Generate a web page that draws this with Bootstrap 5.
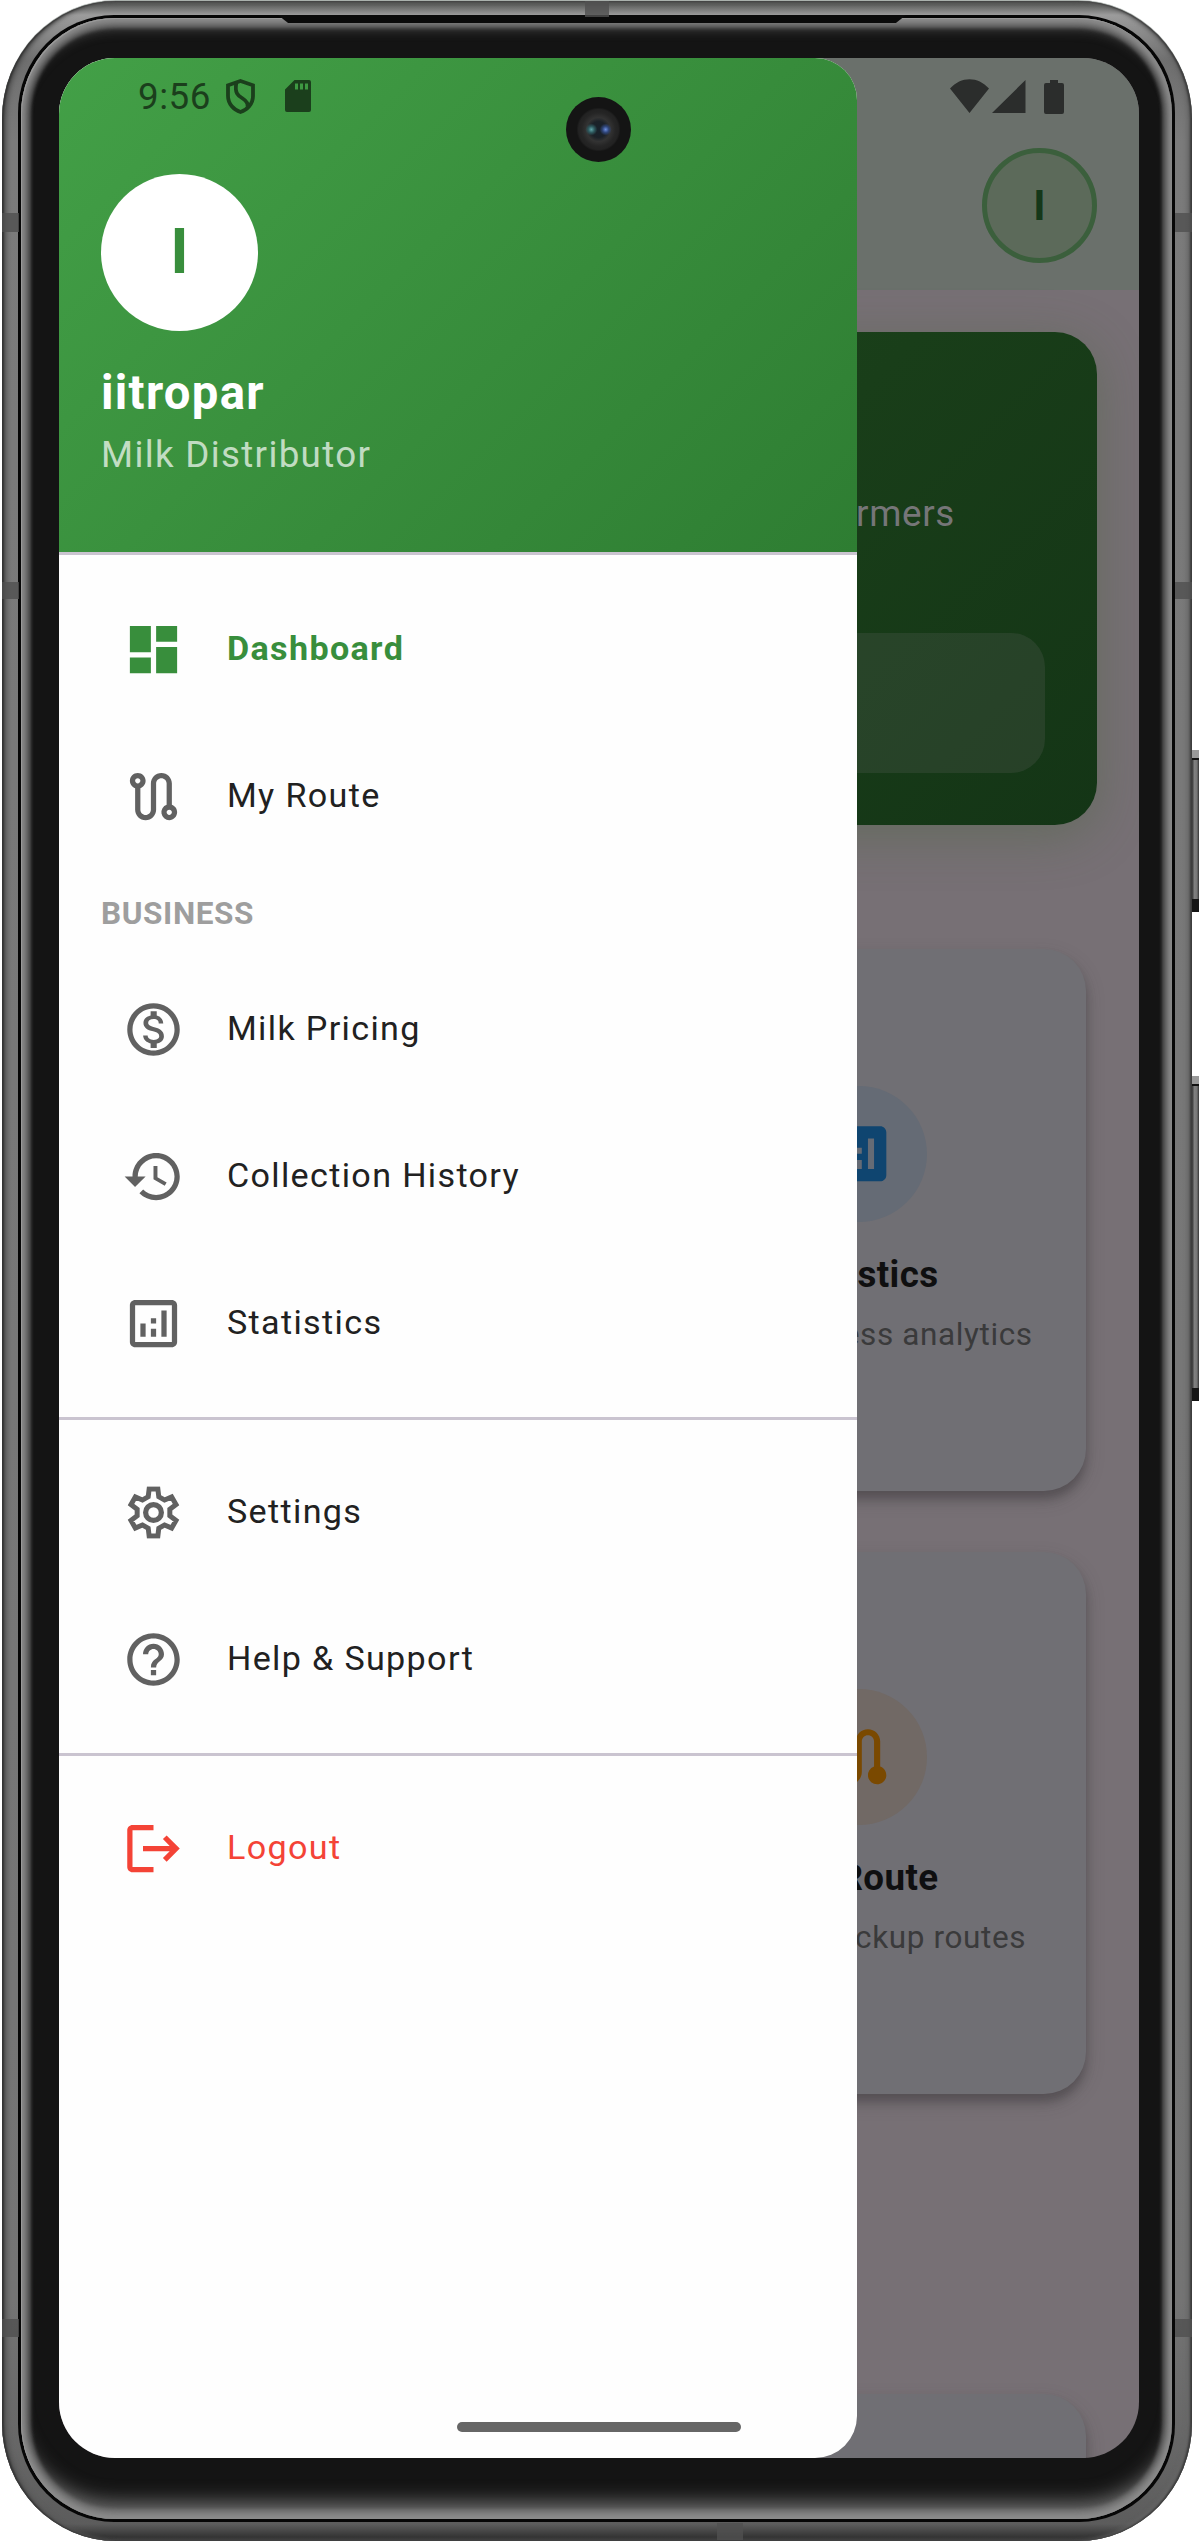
<!DOCTYPE html>
<html lang="en">
<head>
<meta charset="utf-8">
<meta name="viewport" content="width=device-width, initial-scale=1">
<title>Milk Distributor</title>
<link href="https://cdn.jsdelivr.net/npm/bootstrap@5.3.0/dist/css/bootstrap.min.css" rel="stylesheet">
<style>
body{font-family:Roboto,"Liberation Sans",sans-serif;background:#fff;width:1200px;height:2541px;overflow:hidden}
svg{display:block;flex:none}
/* device body */
.phone{width:1190px;height:2540px;margin-left:2px;margin-top:1px;border-radius:114px/118px;padding:14px 17px 19px 16px;
 background:linear-gradient(#474947,#9c9c9c 14px,#6f6f6f 60px,#7b7b7b 140px,#747474 2300px,#666 2450px,#5c5c5c 2523px,#2b2b2b 2539px);
 box-shadow:inset 2px 0 2px #333,inset -2px 0 2px #3c3c3c,inset 5px 0 4px #555,inset -5px 0 4px #666,0 -1px 0 #aab1ad}
.seam{height:100%;border-radius:96px/98px;background:#060606;padding:3px}
.glass{height:100%;border-radius:94px/96px;background:#141414;
 padding:40px 31px 60px 38px;
 box-shadow:inset 1px 1px 0 #999,inset 0 0 7px 6px #8c8c8c,inset 0 16px 14px -8px #6b6b6b,inset 0 -26px 20px -10px #747474,inset 0 0 3px 10px #3a3a3a}
.screen{width:1080px;height:2400px;border-radius:56px;background:#777075}
.band{background:#505050;opacity:.8}
.speaker{left:278px;top:15px;width:628px;height:8px;background:#0b0b0b;clip-path:polygon(0 0,100% 0,98.4% 100%,1.6% 100%)}
.sidekey{left:1192px;width:7px;background:linear-gradient(90deg,#333,#808080 35%,#777 70%,#333);border-top:8px solid #999;box-shadow:inset 0 2px #111,inset 0 -13px #151515}
/* status bar */
.status{height:76px;padding:0 75px 0 79px;color:#1b3f1c}
.clock{font-size:36.75px;letter-spacing:.5px;line-height:43px}
.lens{left:507px;top:39px;width:65px;height:65px;background:radial-gradient(circle at 39% 50%,#5fa3a8 0,#2f5b60 3px,transparent 6px),radial-gradient(circle at 61% 50%,#6d8ee0 0,#30477c 3px,transparent 6px),radial-gradient(circle,#18222c 0,#1b2128 8px,#333 12px,#252525 17px,#222 20px,#141414 22px)}
.pill{left:398px;top:2364px;width:284px;height:10px;background:#666;border-radius:5px}
/* dimmed dashboard */
.topbar{height:232px;background:#6a706b;padding:90px 42px 0}
.me{width:115px;height:115px;border:5px solid #3b5f3c;background:#5c6a5a;color:#15381a;font-size:42px;font-weight:700}
.hero{margin:42px 42px 0;height:493px;border-radius:42px;padding:52px;background:linear-gradient(135deg,#1f4a20,#193e19 55%,#143516);box-shadow:0 11px 50px rgba(75,100,65,.45)}
.hero-text{font-size:36.75px;line-height:43px;letter-spacing:.66px;color:#767678;margin:0 90px 98px 0}
.hero-stat{height:140px;border-radius:34px;background:rgba(119,112,117,.19)}
.tiles{margin-top:124px;padding:0 53px 0 52px;display:grid;grid-template-columns:455px 455px;gap:61px 65px}
.tile{height:542px;border-radius:42px;background:#706f74;padding-top:137px;box-shadow:0 8px 10px rgba(30,25,30,.28),0 8px 20px rgba(60,60,60,.2)}
.dot{width:136px;height:136px}
.tile-title{font-size:36.75px;line-height:50px;font-weight:700;letter-spacing:.4px;color:#0f0f10;margin-top:28px}
.tile-sub{font-size:31.5px;line-height:42px;letter-spacing:.62px;color:#3a3a3b;margin-top:14px;white-space:nowrap}
.recent{margin:300px 53px 0 52px;height:300px}
/* drawer */
.drawer{width:798px;height:2400px;border-radius:0 42px 42px 0;background:#fefefe;color:#212121}
.drawer-head{height:497px;border-bottom:3px solid #cac4d0;padding:116px 42px 0;background:linear-gradient(135deg,#43a047,#2e7d32)}
.initial{width:157px;height:157px;color:#388e3c;font-size:63px;font-weight:700;background:#fff}
.who{font-size:47.25px;line-height:54px;font-weight:700;letter-spacing:1.3px;color:#fff;margin-top:35px}
.role{font-size:36.75px;line-height:43px;letter-spacing:1.32px;color:rgba(255,255,255,.7);margin-top:13px}
.menu{padding-top:21px}
.entry{height:147px;padding:0 63px;gap:42px;font-size:34.125px;letter-spacing:1.34px;color:#212121;text-decoration:none}
.entry span{padding-bottom:2px}
.entry svg{fill:#616161}
.entry.on{color:#388e3c;font-weight:700}
.entry.on svg{fill:#388e3c}
.entry.out{color:#f44336}
.entry.out svg{fill:#f44336}
.group-name{height:86px;padding:2px 42px 0;font-size:31.5px;font-weight:700;letter-spacing:.6px;color:#9e9e9e}
.rule{height:3px;margin:20px 0 19px;background:#cac4d0}
</style>
</head>
<body>
<main class="phone">
 <div class="seam"><div class="glass">
  <div class="screen position-relative overflow-hidden">

   <div class="topbar d-flex justify-content-end">
    <div class="me rounded-circle d-flex align-items-center justify-content-center">I</div>
   </div>
   <section class="hero d-flex flex-column justify-content-end">
    <div class="hero-text text-end">Collect milk from your farmers</div>
    <div class="hero-stat"></div>
   </section>
   <section class="tiles">
    <div class="tile"></div>
    <div class="tile d-flex flex-column align-items-center">
     <div class="dot rounded-circle d-flex align-items-center justify-content-center" style="background:#656b75">
      <svg width="73.5" height="73.5" viewBox="0 0 24 24" fill="#0f4570"><path d="M19 3H5c-1.1 0-2 .9-2 2v14c0 1.1.9 2 2 2h14c1.1 0 2-.9 2-2V5c0-1.1-.9-2-2-2zM9 17H7v-5h2v5zm4 0h-2v-3h2v3zm0-5h-2v-2h2v2zm4 5h-2V7h2v10z"/></svg>
     </div>
     <div class="tile-title">Statistics</div>
     <div class="tile-sub">View business analytics</div>
    </div>
    <div class="tile"></div>
    <div class="tile d-flex flex-column align-items-center">
     <div class="dot rounded-circle d-flex align-items-center justify-content-center" style="background:#716965">
      <svg width="73.5" height="73.5" viewBox="0 0 24 24" fill="#7a4900"><path d="M19 15.18V7c0-2.21-1.79-4-4-4s-4 1.79-4 4v10c0 1.1-.9 2-2 2s-2-.9-2-2V8.82C8.16 8.4 9 7.3 9 6c0-1.66-1.34-3-3-3S3 4.34 3 6c0 1.3.84 2.4 2 2.82V17c0 2.21 1.79 4 4 4s4-1.79 4-4V7c0-1.1.9-2 2-2s2 .9 2 2v8.18A2.996 2.996 0 0 0 18 21c1.66 0 3-1.34 3-3 0-1.3-.84-2.4-2-2.82z"/></svg>
     </div>
     <div class="tile-title">My Route</div>
     <div class="tile-sub ps-2 ms-1">Manage pickup routes</div>
    </div>
   </section>
   <div class="tile recent"></div>

   <aside class="drawer position-absolute top-0 start-0 overflow-hidden">
    <header class="drawer-head">
     <div class="initial rounded-circle d-flex align-items-center justify-content-center">I</div>
     <div class="who">iitropar</div>
     <div class="role">Milk Distributor</div>
    </header>
    <nav class="menu d-flex flex-column">
     <a class="entry on d-flex align-items-center" href="#"><svg width="63" height="63" viewBox="0 0 24 24"><path d="M3 13h8V3H3zM3 21h8v-6H3zM13 21h8V11h-8zM13 3v6h8V3z"/></svg><span>Dashboard</span></a>
     <a class="entry d-flex align-items-center" href="#"><svg width="63" height="63" viewBox="0 0 24 24"><path fill-rule="evenodd" d="M19 15.18V7c0-2.21-1.79-4-4-4s-4 1.79-4 4v10c0 1.1-.9 2-2 2s-2-.9-2-2V8.82C8.16 8.4 9 7.3 9 6c0-1.66-1.34-3-3-3S3 4.34 3 6c0 1.3.84 2.4 2 2.82V17c0 2.21 1.79 4 4 4s4-1.79 4-4V7c0-1.1.9-2 2-2s2 .9 2 2v8.18A2.996 2.996 0 0 0 18 21c1.66 0 3-1.34 3-3 0-1.3-.84-2.4-2-2.82zM6 7c-.55 0-1-.45-1-1s.45-1 1-1 1 .45 1 1-.45 1-1 1zm12 12c-.55 0-1-.45-1-1s.45-1 1-1 1 .45 1 1-.45 1-1 1z"/></svg><span>My Route</span></a>
     <div class="group-name d-flex align-items-center">BUSINESS</div>
     <a class="entry d-flex align-items-center" href="#"><svg width="63" height="63" viewBox="0 0 24 24"><path d="M12 2C6.48 2 2 6.48 2 12s4.48 10 10 10 10-4.48 10-10S17.52 2 12 2zm0 18c-4.41 0-8-3.59-8-8s3.59-8 8-8 8 3.59 8 8-3.59 8-8 8zm.31-8.86c-1.77-.45-2.34-.94-2.34-1.67 0-.84.79-1.43 2.1-1.43 1.38 0 1.9.66 1.94 1.64h1.71c-.05-1.34-.87-2.57-2.49-2.97V5H10.9v1.69c-1.51.32-2.72 1.3-2.72 2.81 0 1.79 1.49 2.69 3.66 3.21 1.95.46 2.34 1.15 2.34 1.87 0 .53-.39 1.39-2.1 1.39-1.6 0-2.23-.72-2.32-1.64H8.04c.1 1.7 1.36 2.66 2.86 2.97V19h2.34v-1.67c1.52-.29 2.72-1.16 2.73-2.77-.01-2.2-1.9-2.96-3.66-3.42z"/></svg><span>Milk Pricing</span></a>
     <a class="entry d-flex align-items-center" href="#"><svg width="63" height="63" viewBox="0 0 24 24"><path d="M13 3c-4.97 0-9 4.03-9 9H1l3.89 3.89.07.14L9 12H6c0-3.87 3.13-7 7-7s7 3.13 7 7-3.13 7-7 7c-1.93 0-3.68-.79-4.94-2.06l-1.42 1.42C8.27 19.99 10.51 21 13 21c4.97 0 9-4.03 9-9s-4.03-9-9-9zm-1 5v5l4.28 2.54.72-1.21-3.5-2.08V8z"/></svg><span>Collection History</span></a>
     <a class="entry d-flex align-items-center" href="#"><svg width="63" height="63" viewBox="0 0 24 24"><path d="M19 3H5c-1.1 0-2 .9-2 2v14c0 1.1.9 2 2 2h14c1.1 0 2-.9 2-2V5c0-1.1-.9-2-2-2zm0 16H5V5h14v14zM7 12h2v5H7zm8-5h2v10h-2zm-4 7h2v3h-2zm0-4h2v2h-2z"/></svg><span>Statistics</span></a>
     <div class="rule"></div>
     <a class="entry d-flex align-items-center" href="#"><svg width="63" height="63" viewBox="-12 -12 24 24"><defs><path id="gear" d="M-2.9-6.6L-2.5-9.9H2.5L2.9-6.6L4.27-5.81L7.32-7.11L9.82-2.78L7.17-.79V.79L9.82 2.78L7.32 7.11L4.27 5.81L2.9 6.6L2.5 9.9H-2.5L-2.9 6.6L-4.27 5.81L-7.32 7.11L-9.82 2.78L-7.17 .79V-.79L-9.82-2.78L-7.32-7.11L-4.27-5.81Z"/><clipPath id="gearclip"><use href="#gear"/></clipPath></defs><use href="#gear" fill="none" stroke="#616161" stroke-width="3.8" clip-path="url(#gearclip)"/><circle r="3" fill="none" stroke="#616161" stroke-width="2"/></svg><span>Settings</span></a>
     <a class="entry d-flex align-items-center" href="#"><svg width="63" height="63" viewBox="0 0 24 24"><path d="M11 18h2v-2h-2v2zm1-16C6.48 2 2 6.48 2 12s4.48 10 10 10 10-4.48 10-10S17.52 2 12 2zm0 18c-4.41 0-8-3.59-8-8s3.59-8 8-8 8 3.59 8 8-3.59 8-8 8zm0-14c-2.21 0-4 1.79-4 4h2c0-1.1.9-2 2-2s2 .9 2 2c0 2-3 1.75-3 5h2c0-2.25 3-2.5 3-5 0-2.21-1.79-4-4-4z"/></svg><span>Help &amp; Support</span></a>
     <div class="rule"></div>
     <a class="entry out d-flex align-items-center" href="#"><svg width="63" height="63" viewBox="0 0 24 24"><path d="M17 7l-1.41 1.41L18.17 11H8v2h10.17l-2.58 2.58L17 17l5-5zM4 5h8V3H4c-1.1 0-2 .9-2 2v14c0 1.1.9 2 2 2h8v-2H4V5z"/></svg><span>Logout</span></a>
    </nav>
   </aside>

   <div class="status position-absolute top-0 start-0 w-100 d-flex align-items-center">
    <span class="clock">9:56</span>
    <svg width="29" height="35" viewBox="0 0 29 35" fill="none" stroke="#1b3f1c" stroke-width="3.8" style="margin-left:15px"><path d="M14.5 2L27 6.3V17C27 25 21 31 14.5 33C8 31 2 25 2 17V6.3Z"/><path d="M10.3 4C8.500 14 12 16.500 16 19S22.500 24 21.500 28"/></svg>
    <svg width="26" height="32" viewBox="0 0 26 32" style="margin-left:30px"><path fill="#1b3f1c" fill-rule="evenodd" d="M9.500 0H24q2 0 2 2V30q0 2-2 2H2q-2 0-2-2V9.500ZM10 3.500v6h3v-6zM15 3.500v6h3v-6zM20 3.500v6h3v-6z"/></svg>
    <svg class="ms-auto" width="114" height="35" viewBox="0 0 114 35" fill="#2b2d2c"><path d="M0 9.500C11-3 28-3 39 9.500L19.500 34ZM42 34L75.500 1V34ZM100 1h8v3h4q2 0 2 2V33q0 2-2 2H96q-2 0-2-2V6q0-2 2-2h4z"/></svg>
   </div>
   <div class="lens position-absolute rounded-circle"></div>
   <div class="pill position-absolute"></div>
  </div>
 </div></div>
</main>
<!-- antenna bands, earpiece slot and side keys sit on top of the metal rim -->
<div class="speaker position-absolute"></div>
<div class="band position-absolute" style="left:585px;top:1px;width:24px;height:16px"></div>
<div class="band position-absolute" style="left:717px;top:2523px;width:26px;height:17px"></div>
<div class="band position-absolute" style="left:2px;top:213px;width:17px;height:19px"></div>
<div class="band position-absolute" style="left:2px;top:582px;width:17px;height:17px"></div>
<div class="band position-absolute" style="left:2px;top:2319px;width:17px;height:18px"></div>
<div class="band position-absolute" style="left:1175px;top:213px;width:17px;height:19px"></div>
<div class="band position-absolute" style="left:1175px;top:582px;width:17px;height:17px"></div>
<div class="band position-absolute" style="left:1175px;top:2319px;width:17px;height:18px"></div>
<div class="sidekey position-absolute" style="top:750px;height:162px"></div>
<div class="sidekey position-absolute" style="top:1076px;height:325px"></div>
<script src="https://cdn.jsdelivr.net/npm/bootstrap@5.3.0/dist/js/bootstrap.bundle.min.js"></script>
</body>
</html>
